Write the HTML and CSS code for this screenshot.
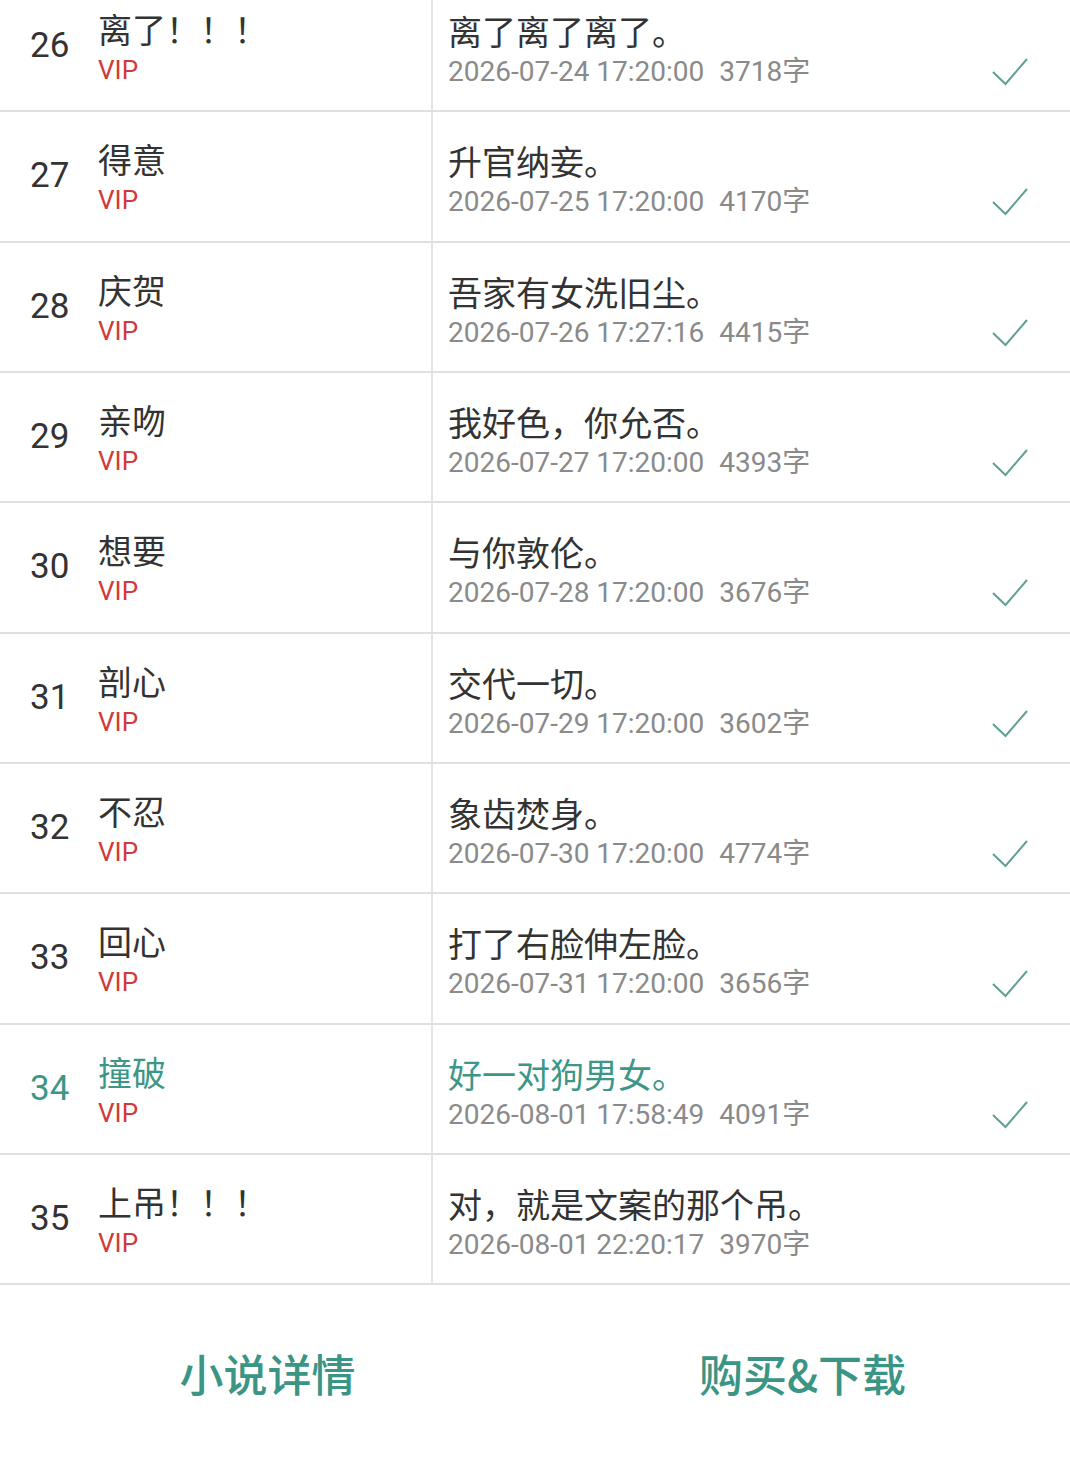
FILE: index.html
```html
<!DOCTYPE html>
<html lang="zh-CN">
<head>
    <meta charset="UTF-8">
    <meta name="viewport" content="width=device-width, initial-scale=1.0">
    <title>章节目录</title>
    <link rel="stylesheet" href="styles.css">
</head>
<body>
    <div class="chapter-list" id="chapterList"></div>

    <div class="footer">
        <a class="footer-btn" href="#">小说详情</a>
        <a class="footer-btn" href="#">购买&amp;下载</a>
    </div>

    <script>
        const chapters = [
            { no: 26, title: '离了！！！', summary: '离了离了离了。', time: '2026-07-24 17:20:00', words: 3718, bought: true },
            { no: 27, title: '得意', summary: '升官纳妾。', time: '2026-07-25 17:20:00', words: 4170, bought: true },
            { no: 28, title: '庆贺', summary: '吾家有女洗旧尘。', time: '2026-07-26 17:27:16', words: 4415, bought: true },
            { no: 29, title: '亲吻', summary: '我好色，你允否。', time: '2026-07-27 17:20:00', words: 4393, bought: true },
            { no: 30, title: '想要', summary: '与你敦伦。', time: '2026-07-28 17:20:00', words: 3676, bought: true },
            { no: 31, title: '剖心', summary: '交代一切。', time: '2026-07-29 17:20:00', words: 3602, bought: true },
            { no: 32, title: '不忍', summary: '象齿焚身。', time: '2026-07-30 17:20:00', words: 4774, bought: true },
            { no: 33, title: '回心', summary: '打了右脸伸左脸。', time: '2026-07-31 17:20:00', words: 3656, bought: true },
            { no: 34, title: '撞破', summary: '好一对狗男女。', time: '2026-08-01 17:58:49', words: 4091, bought: true, current: true },
            { no: 35, title: '上吊！！！', summary: '对，就是文案的那个吊。', time: '2026-08-01 22:20:17', words: 3970, bought: false }
        ];

        const checkIcon = `
            <svg class="check" width="36" height="28" viewBox="0 0 36 28">
                <polyline points="1,14 13.5,26 35,1" fill="none" stroke="currentColor" stroke-width="2"/>
            </svg>`;

        function renderChapter(ch) {
            return `
                <div class="chapter${ch.current ? ' current' : ''}">
                    <div class="chapter-left">
                        <span class="chapter-no">${ch.no}</span>
                        <div class="chapter-name">
                            <div class="chapter-title">${ch.title}</div>
                            <div class="vip">VIP</div>
                        </div>
                    </div>
                    <div class="chapter-right">
                        <div class="chapter-info">
                            <div class="chapter-summary">${ch.summary}</div>
                            <div class="chapter-meta">${ch.time}<span class="words">${ch.words}字</span></div>
                        </div>
                        ${ch.bought ? checkIcon : ''}
                    </div>
                </div>
            `;
        }

        document.getElementById('chapterList').innerHTML = chapters.map(renderChapter).join('');
    </script>
</body>
</html>
```

FILE: styles.css
```css
body {
    margin: 0;
    background: #fff;
    color: #333;
    font-family: Roboto, "Noto Sans CJK SC", sans-serif;
    overflow: hidden;
}

.chapter-list {
    margin-top: -18px;
}

.chapter {
    display: flex;
    height: 130.33px;
    box-sizing: border-box;
    border-bottom: 2px solid #e0e0e0;
}

.chapter-left {
    width: 433px;
    flex-shrink: 0;
    display: flex;
    align-items: flex-start;
    padding: 27px 0 0 30px;
    box-sizing: border-box;
    border-right: 2px solid #e4e4e4;
}

.chapter-no {
    width: 68px;
    margin-top: 15px;
    font-size: 35px;
    line-height: 44px;
    color: #333;
}

.chapter-title {
    font-family: "Noto Sans CJK SC", sans-serif;
    font-size: 34px;
    line-height: 40px;
    color: #333;
}

.vip {
    margin-top: 6px;
    font-size: 26px;
    line-height: 30px;
    color: #d13a3a;
}

.chapter-right {
    flex-grow: 1;
    display: flex;
    justify-content: space-between;
    align-items: flex-start;
    padding: 29px 42px 0 15px;
}

.chapter-summary {
    font-family: "Noto Sans CJK SC", sans-serif;
    font-size: 34px;
    line-height: 40px;
    color: #333;
}

.chapter-meta {
    margin-top: 5px;
    font-size: 28px;
    line-height: 32px;
    color: #8a8a8a;
}

.words {
    margin-left: 15px;
}

.check {
    margin-top: 47px;
    color: #5f9f95;
}

.current .chapter-no,
.current .chapter-title,
.current .chapter-summary {
    color: #3d9786;
}

.footer {
    display: grid;
    grid-template-columns: 1fr 1fr;
    height: 175px;
}

.footer-btn {
    display: flex;
    align-items: center;
    justify-content: center;
    font-family: "Noto Sans CJK SC", sans-serif;
    font-size: 44px;
    font-weight: 500;
    color: #3a9584;
    text-decoration: none;
}
```
